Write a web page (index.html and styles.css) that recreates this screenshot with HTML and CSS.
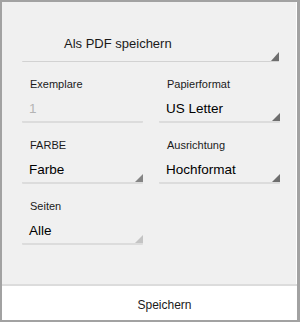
FILE: index.html
```html
<!DOCTYPE html>
<html lang="de">

<head>
  <meta charset="UTF-8">
  <title>Drucken</title>
  <meta name="viewport" content="width=device-width, initial-scale=1.0">
  <link rel="stylesheet" href="styles.css">
</head>

<body>
  <div class="dialog">
    <div class="panel">
      <!-- Drucker -->
      <div class="field field-main">
        <span class="value">Als PDF speichern</span>
        <span class="arrow"></span>
      </div>

      <div class="grid">
        <!-- Exemplare -->
        <div class="group">
          <div class="label">Exemplare</div>
          <div class="field">
            <span class="value value-disabled">1</span>
          </div>
        </div>

        <!-- Papierformat -->
        <div class="group">
          <div class="label">Papierformat</div>
          <div class="field">
            <span class="value">US Letter</span>
            <span class="arrow"></span>
          </div>
        </div>

        <!-- Farbe -->
        <div class="group">
          <div class="label">FARBE</div>
          <div class="field">
            <span class="value">Farbe</span>
            <span class="arrow arrow-mid"></span>
          </div>
        </div>

        <!-- Ausrichtung -->
        <div class="group">
          <div class="label">Ausrichtung</div>
          <div class="field">
            <span class="value">Hochformat</span>
            <span class="arrow"></span>
          </div>
        </div>

        <!-- Seiten -->
        <div class="group">
          <div class="label">Seiten</div>
          <div class="field">
            <span class="value">Alle</span>
            <span class="arrow arrow-light"></span>
          </div>
        </div>
      </div>
    </div>

    <!-- Kopfzeile unten -->
    <div class="footer">
      <button class="btn-save">Speichern</button>
    </div>
  </div>
</body>

</html>
```

FILE: styles.css
```css
/* Общие стили */
body {
  margin: 0;
  font-family: 'Liberation Sans', Arial, sans-serif;
  color: #1a1a1a;
}

.dialog {
  width: 300px;
  height: 322px;
  box-sizing: border-box;
  border: 2px solid #a2a2a2;
  border-right-width: 3px;
  display: flex;
  flex-direction: column;
  background-color: #fff;
}

/* Серая панель с полями */
.panel {
  flex: 1;
  background-color: #f0f0f0;
  padding: 24px 17px 0 20px;
  border-right: 1px solid #fff;
}

.field {
  display: flex;
  height: 32px;
  padding: 8px 0 0 7px;
  box-sizing: border-box;
  border-bottom: 2px solid #dcdcdc;
  border-radius: 1px;
}

.field .value {
  font-size: 13.5px;
  line-height: 20px;
  color: #000;
}

.value-disabled {
  color: #b4b4b4 !important;
}

.field-main {
  height: 36px;
  padding: 8px 0 0 42px;
  border-bottom: 1px solid #d2d2d2;
}

.field-main .value {
  font-size: 13px;
  color: #1a1a1a;
}

/* Треугольник выпадающего списка */
.arrow {
  margin-left: auto;
  align-self: flex-end;
  width: 0;
  height: 0;
  border-left: 8px solid transparent;
  border-bottom: 8px solid #6e6e6e;
}

.field-main .arrow {
  border-bottom-width: 9px;
}

.arrow-mid {
  border-bottom-color: #858585;
}

.arrow-light {
  border-bottom-color: #c4c4c4;
}

.grid {
  display: grid;
  grid-template-columns: 121px 121px;
  column-gap: 16px;
  row-gap: 15px;
  margin-top: 15px;
}

.label {
  font-size: 11px;
  line-height: 14px;
  padding-left: 8px;
  color: #1a1a1a;
}

/* Нижняя кнопка */
.footer {
  height: 36px;
  box-sizing: border-box;
  border-top: 2px solid #dcdcdc;
  background-color: #fff;
  display: flex;
  align-items: center;
  justify-content: center;
  padding: 4px 0 0 30px;
}

.btn-save {
  border: none;
  background: transparent;
  font-family: inherit;
  font-size: 12px;
  color: #1a1a1a;
  padding: 0;
  cursor: pointer;
}
```
